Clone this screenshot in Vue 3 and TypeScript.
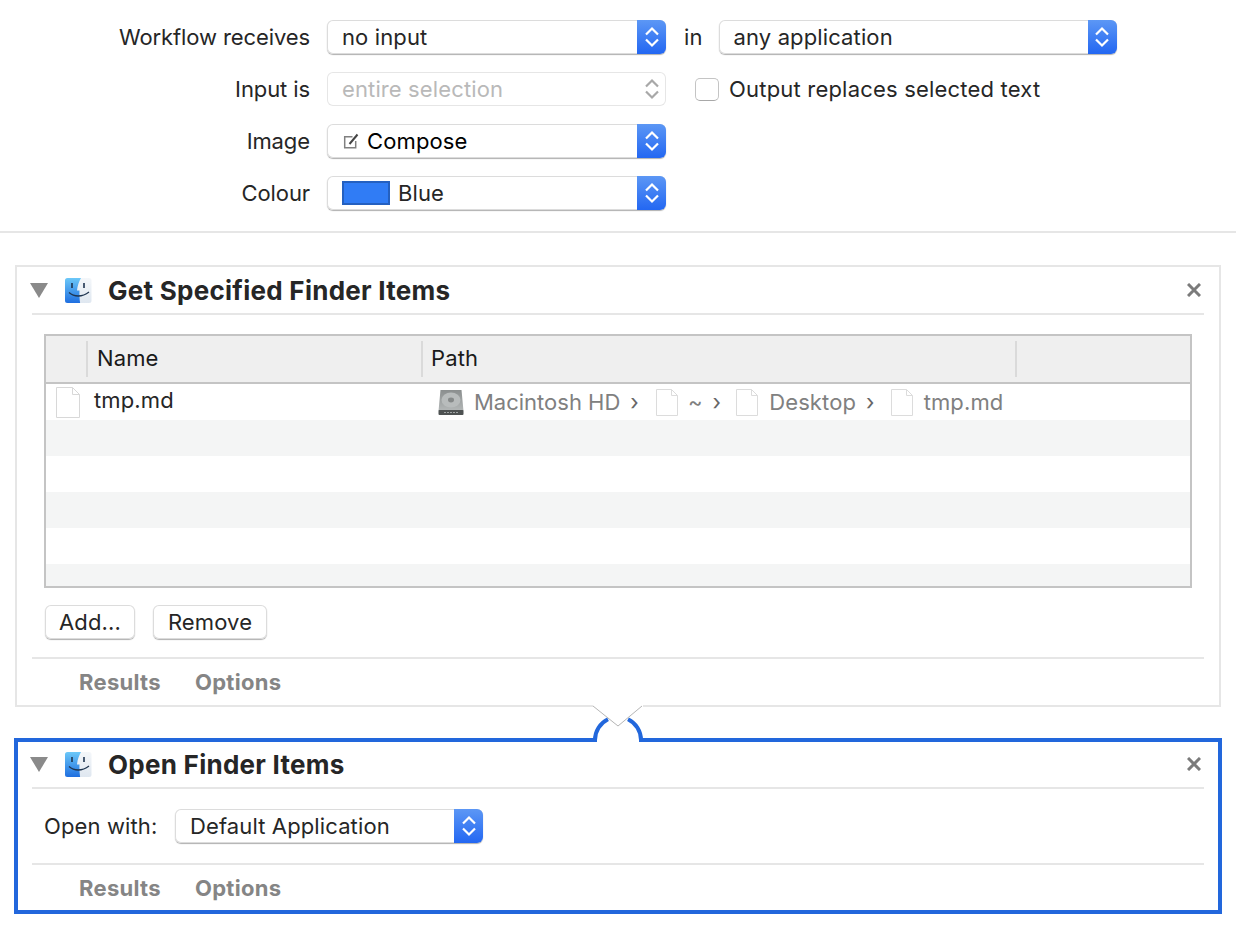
<template>
  <div class="page">
    <!-- Workflow settings -->
    <section class="settings">
      <div class="field-row">
        <label class="field-label">Workflow receives</label>
        <div class="select select-md">
          <span class="select-text">no input</span>
          <span class="stepper"><svg width="20" height="28" viewBox="0 0 20 28"><path d="M4 11.5 10 5.5l6 6M4 16.5l6 6 6-6" fill="none" stroke="#fff" stroke-width="2.2"/></svg></span>
        </div>
        <span class="in-label">in</span>
        <div class="select select-lg">
          <span class="select-text">any application</span>
          <span class="stepper"><svg width="20" height="28" viewBox="0 0 20 28"><path d="M4 11.5 10 5.5l6 6M4 16.5l6 6 6-6" fill="none" stroke="#fff" stroke-width="2.2"/></svg></span>
        </div>
      </div>
      <div class="field-row">
        <label class="field-label">Input is</label>
        <div class="select select-md disabled">
          <span class="select-text">entire selection</span>
          <span class="stepper plain"><svg width="20" height="28" viewBox="0 0 20 28"><path d="M4 11.5 10 5.5l6 6M4 16.5l6 6 6-6" fill="none" stroke="#a8a8a8" stroke-width="2.2"/></svg></span>
        </div>
        <span class="checkbox"></span>
        <span class="checkbox-label">Output replaces selected text</span>
      </div>
      <div class="field-row">
        <label class="field-label">Image</label>
        <div class="select select-md">
          <svg class="compose" width="17" height="16" viewBox="0 0 17 16">
            <path d="M10.500 3.700H2.700v11h11V8" fill="none" stroke="#808080" stroke-width="1.500"/>
            <path d="M7.500 11 15.500 1.500" stroke="#444" stroke-width="2"/>
          </svg>
          <span class="select-text black">Compose</span>
          <span class="stepper"><svg width="20" height="28" viewBox="0 0 20 28"><path d="M4 11.5 10 5.5l6 6M4 16.5l6 6 6-6" fill="none" stroke="#fff" stroke-width="2.2"/></svg></span>
        </div>
      </div>
      <div class="field-row">
        <label class="field-label">Colour</label>
        <div class="select select-md">
          <span class="swatch"></span>
          <span class="select-text">Blue</span>
          <span class="stepper"><svg width="20" height="28" viewBox="0 0 20 28"><path d="M4 11.5 10 5.5l6 6M4 16.5l6 6 6-6" fill="none" stroke="#fff" stroke-width="2.2"/></svg></span>
        </div>
      </div>
    </section>

    <!-- Action 1 -->
    <section class="action first">
      <header class="action-head">
        <span class="triangle"></span>
        <svg class="finder" width="28" height="27" viewBox="0 0 28 27">
          <defs>
            <linearGradient id="fb" x1="0" y1="0" x2="0" y2="1"><stop offset="0" stop-color="#6cc8f8"/><stop offset="1" stop-color="#1f6fe0"/></linearGradient>
            <linearGradient id="fw" x1="0" y1="0" x2="0" y2="1"><stop offset="0" stop-color="#f4f7fa"/><stop offset="1" stop-color="#dfe7f0"/></linearGradient>
          </defs>
          <rect x="1" y="1" width="26.500" height="25" rx="2.500" fill="url(#fw)"/>
          <path d="M3.500 1H17c-2 3.500-3.500 7.500-4 12.500h2.500c-.2 4 0 8 .6 12.500H3.500A2.500 2.500 0 0 1 1 23.500v-20A2.500 2.500 0 0 1 3.500 1z" fill="url(#fb)"/>
          <path d="M8 6v5M20 6v5" stroke="#1f3550" stroke-width="1.600"/>
          <path d="M5 15.500c5 4.500 13 5 20-.5" fill="none" stroke="#1f3550" stroke-width="1.300"/>
        </svg>
        <h2 class="action-title">Get Specified Finder Items</h2>
        <svg class="close" width="14" height="14" viewBox="0 0 14 14"><path d="M1 1l12 12M13 1 1 13" stroke="#7b7b7b" stroke-width="3"/></svg>
      </header>

      <div class="files">
        <div class="files-head">
          <div class="col"></div>
          <div class="col"><span class="name-head">Name</span></div>
          <div class="col"><span>Path</span></div>
          <div class="col"><span></span></div>
        </div>
        <div class="files-body">
          <div class="file-row">
            <div class="name-cell">
              <svg class="doc big" width="24" height="31" viewBox="0 0 24 31"><path d="M.5.500h16l7 7v23H.500z" fill="#fff" stroke="#d8d8d8"/><path d="M16.500.500v7h7" fill="none" stroke="#d8d8d8"/></svg>
              <span class="file-name">tmp.md</span>
            </div>
            <div class="path-cell">
              <svg class="disk" width="26" height="27" viewBox="0 0 26 27">
                <defs>
                  <linearGradient id="dk" x1="0" y1="0" x2="0" y2="1"><stop offset="0" stop-color="#8a8e8e"/><stop offset="1" stop-color="#b4b8b8"/></linearGradient>
                </defs>
                <path d="M2.500 1h21l2 21H.500z" fill="url(#dk)"/>
                <ellipse cx="13" cy="11" rx="9.500" ry="7.500" fill="#b8bcbc"/>
                <ellipse cx="13" cy="11" rx="3" ry="2.400" fill="#858989"/>
                <rect x=".5" y="21" width="25" height="5" rx="1" fill="#4e5252"/>
                <path d="M6 23.500h14" stroke="#a0a4a4" stroke-width="1" stroke-dasharray="2 1"/>
              </svg>
              <span class="crumb disk-name">Macintosh HD</span>
              <span class="sep sep-first">›</span>
              <svg class="doc" width="22" height="27" viewBox="0 0 22 27"><path d="M.5.500h15l6 6v20H.500z" fill="#fff" stroke="#dcdcdc"/><path d="M15.500.500v6h6" fill="none" stroke="#dcdcdc"/></svg>
              <span class="crumb tilde">~</span>
              <span class="sep">›</span>
              <svg class="doc" width="22" height="27" viewBox="0 0 22 27"><path d="M.5.500h15l6 6v20H.500z" fill="#fff" stroke="#dcdcdc"/><path d="M15.500.500v6h6" fill="none" stroke="#dcdcdc"/></svg>
              <span class="crumb">Desktop</span>
              <span class="sep sep-last">›</span>
              <svg class="doc" width="22" height="27" viewBox="0 0 22 27"><path d="M.5.500h15l6 6v20H.500z" fill="#fff" stroke="#dcdcdc"/><path d="M15.500.500v6h6" fill="none" stroke="#dcdcdc"/></svg>
              <span class="crumb">tmp.md</span>
            </div>
          </div>
          <div v-for="n in 5" :key="n" :class="['stripe', { odd: n % 2 === 1 }]"></div>
        </div>
      </div>

      <div class="buttons">
        <button type="button" class="btn btn-add">Add...</button>
        <button type="button" class="btn btn-remove">Remove</button>
      </div>

      <footer class="action-foot">
        <span class="foot-tab results">Results</span>
        <span class="foot-tab">Options</span>
      </footer>
    </section>

    <!-- Action 2, selected -->
    <section class="action second">
      <svg class="connector" width="56" height="42" viewBox="0 0 56 42">
        <rect x="1" y="0" width="50" height="4" fill="#fff"/>
        <rect x="4" y="33" width="44" height="6" fill="#fff"/>
        <path d="M3 38V36a23 23 0 0 1 13-20.700M36 15.300A23 23 0 0 1 49 36v2" fill="none" stroke="#2267dc" stroke-width="4"/>
        <path d="M1 2 26 22 50 2" fill="none" stroke="#b5b5b5" stroke-width="1"/>
      </svg>
      <header class="action-head">
        <span class="triangle"></span>
        <svg class="finder" width="28" height="27" viewBox="0 0 28 27">
          <rect x="1" y="1" width="26.500" height="25" rx="2.500" fill="url(#fw)"/>
          <path d="M3.500 1H17c-2 3.500-3.500 7.500-4 12.500h2.500c-.2 4 0 8 .6 12.500H3.500A2.500 2.500 0 0 1 1 23.500v-20A2.500 2.500 0 0 1 3.500 1z" fill="url(#fb)"/>
          <path d="M8 6v5M20 6v5" stroke="#1f3550" stroke-width="1.600"/>
          <path d="M5 15.500c5 4.500 13 5 20-.5" fill="none" stroke="#1f3550" stroke-width="1.300"/>
        </svg>
        <h2 class="action-title">Open Finder Items</h2>
        <svg class="close" width="14" height="14" viewBox="0 0 14 14"><path d="M1 1l12 12M13 1 1 13" stroke="#7b7b7b" stroke-width="3"/></svg>
      </header>
      <div class="open-row">
        <label class="open-label">Open with:</label>
        <div class="select select-open">
          <span class="select-text">Default Application</span>
          <span class="stepper"><svg width="20" height="28" viewBox="0 0 20 28"><path d="M4 11.5 10 5.5l6 6M4 16.5l6 6 6-6" fill="none" stroke="#fff" stroke-width="2.2"/></svg></span>
        </div>
      </div>
      <footer class="action-foot">
        <span class="foot-tab results">Results</span>
        <span class="foot-tab">Options</span>
      </footer>
    </section>
  </div>
</template>

<script setup lang="ts">
</script>

<style scoped>
.page {
  width: 1236px;
  height: 936px;
  overflow: hidden;
  background: #fff;
  font-family: Inter, "Liberation Sans", sans-serif;
  font-size: 22px;
  letter-spacing: 0.12px;
  color: #262626;
  box-sizing: border-box;
}

/* Settings */
.settings {
  height: 233px;
  box-sizing: border-box;
  padding-top: 20px;
  border-bottom: 2px solid #e6e6e6;
  display: flex;
  flex-direction: column;
  gap: 18px;
}

.field-row {
  display: flex;
  align-items: center;
  height: 34px;
}

.field-label {
  width: 310px;
  margin-right: 17px;
  text-align: right;
  letter-spacing: -0.1px;
}

.select {
  position: relative;
  display: flex;
  align-items: center;
  height: 34px;
  box-sizing: border-box;
  padding-left: 15px;
  background: #fff;
  border-radius: 6px;
  box-shadow: 0 0 0 1px #dcdcdc inset, 0 1px 1px #b0b0b0;
  overflow: hidden;
}

.select-md { width: 339px; }
.select-lg { width: 398px; }
.select-open { width: 308px; }

.select.disabled {
  box-shadow: 0 0 0 1px #e6e6e6 inset;
  color: #b9b9b9;
}

.select .black { color: #000; }

.stepper {
  position: absolute;
  right: 0;
  top: 0;
  bottom: 0;
  width: 29px;
  display: flex;
  align-items: center;
  justify-content: center;
  background: linear-gradient(#5c97f5, #2367f2);
}

.stepper.plain { background: none; }

.in-label { margin: 0 16px 0 18px; }

.checkbox {
  width: 24px;
  height: 23px;
  box-sizing: border-box;
  margin-left: 29px;
  border: 1px solid #c4c4c4;
  border-bottom-color: #a8a8a8;
  border-radius: 5px;
}

.checkbox-label {
  margin-left: 10px;
  letter-spacing: 0.2px;
}

.compose { margin-right: 8px; }

.swatch {
  width: 48px;
  height: 24px;
  box-sizing: border-box;
  margin-right: 8px;
  background: #307cf5;
  border: 2px solid #2460c0;
}

/* Actions */
.action {
  position: relative;
  box-sizing: border-box;
}

.action.first {
  width: 1206px;
  height: 442px;
  margin: 32px 0 0 15px;
  border: 2px solid #e6e6e6;
  padding: 0 15px;
}

.action.second {
  width: 1208px;
  height: 176px;
  margin: 31px 0 0 14px;
  border: 4px solid #2267dc;
  padding: 0 14px;
}

.connector {
  position: absolute;
  left: 574px;
  top: -38px;
  z-index: 1;
}

.action-head {
  display: flex;
  align-items: center;
  height: 46px;
  border-bottom: 2px solid #e6e6e6;
}

.second .action-head { height: 45px; }

.triangle {
  width: 0;
  height: 0;
  margin-left: -2px;
  border-left: 9px solid transparent;
  border-right: 9px solid transparent;
  border-top: 15px solid #8a8a8a;
}

.finder { margin-left: 16px; }

.action-title {
  margin: 0 0 0 16px;
  font-size: 26px;
  font-weight: 700;
  letter-spacing: 0.27px;
  color: #262626;
  flex: 1;
}

.close { margin-right: 3px; margin-top: -1px; }

/* Table */
.files {
  width: 1148px;
  height: 254px;
  box-sizing: border-box;
  margin: 19px 0 0 12px;
  border: 2px solid #c4c4c4;
  overflow: hidden;
}

.files-head {
  display: grid;
  grid-template-columns: 40px 335px 594px 1fr;
  align-items: center;
  height: 46px;
  background: #efefef;
  border-bottom: 2px solid #c4c4c4;
  box-sizing: content-box;
  color: #1a1a1a;
}

.col span {
  display: flex;
  align-items: center;
  height: 36px;
  padding-left: 8px;
  padding-bottom: 2px;
  box-sizing: border-box;
  border-left: 2px solid #dadada;
}

.col .name-head { padding-left: 9px; }

.file-row {
  display: flex;
  align-items: center;
  height: 36px;
}

.name-cell {
  width: 376px;
  display: flex;
  align-items: center;
  padding-left: 10px;
  box-sizing: border-box;
}

.file-name { margin-left: 14px; margin-top: -4px; }

.path-cell {
  display: flex;
  align-items: center;
  color: #808080;
}

.disk { margin-left: 16px; margin-right: 10px; }

.crumb { margin-left: 11px; }
.disk-name { margin-left: 0; letter-spacing: 0; }
.tilde { margin-left: 10px; }

.sep {
  margin: 0 15px 0 10px;
  color: #666;
}

.sep-first { margin-right: 17px; }
.sep-last { margin-right: 16px; }

.stripe { height: 36px; }
.stripe.odd { background: #f4f5f5; }

/* Buttons */
.buttons {
  display: flex;
  gap: 18px;
  margin: 17px 0 0 13px;
}

.btn {
  height: 34px;
  padding: 0;
  font: inherit;
  letter-spacing: inherit;
  color: #262626;
  background: #fff;
  border: 0;
  border-radius: 6px;
  box-shadow: 0 0 0 1px #dcdcdc inset, 0 1px 1px #b0b0b0;
}

.btn-add { width: 90px; }
.btn-remove { width: 114px; }

/* Footer */
.action-foot {
  display: flex;
  align-items: center;
  height: 47px;
  margin-top: 18px;
  border-top: 2px solid #e6e6e6;
  padding-left: 47px;
  box-sizing: border-box;
  gap: 34px;
}

.foot-tab {
  font-weight: 700;
  letter-spacing: 0.3px;
  color: #858585;
}

/* Open with */
.open-row {
  display: flex;
  align-items: center;
  height: 74px;
  padding-left: 12px;
  box-sizing: border-box;
}

.open-label { width: 131px; }

.second .action-foot {
  margin-top: 0;
  height: 46px;
  padding-top: 2px;
}
</style>
